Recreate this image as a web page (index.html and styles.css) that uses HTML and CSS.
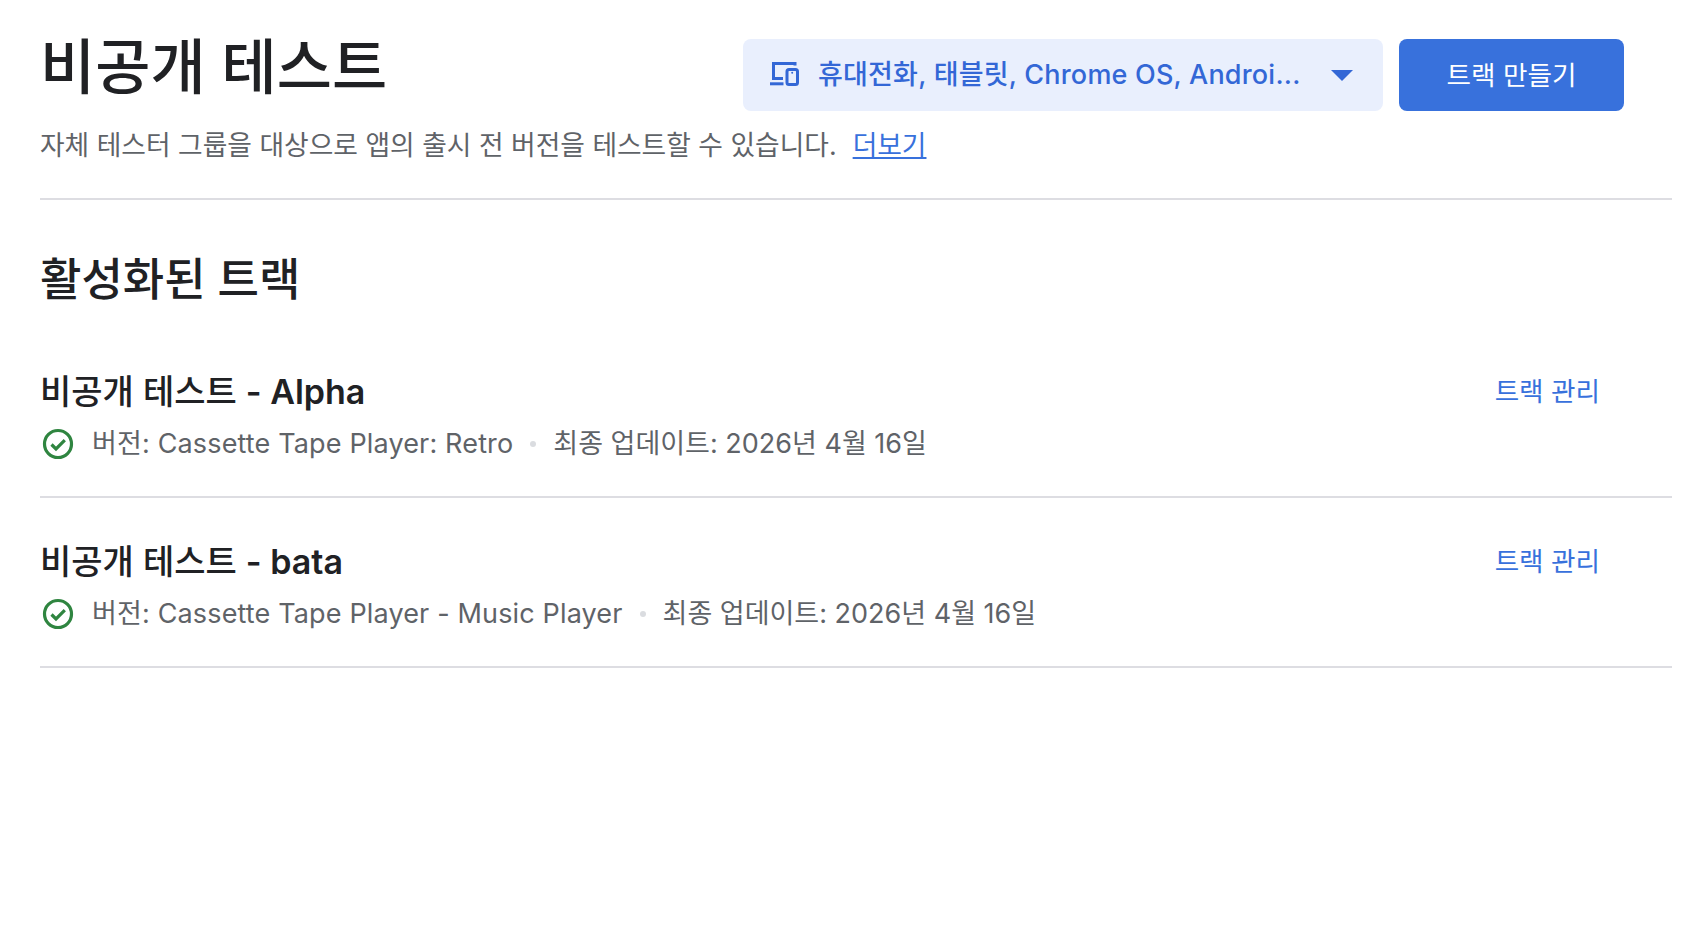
FILE: index.html
```html
<!DOCTYPE html>
<html lang="ko">
<head>
    <meta charset="UTF-8">
    <meta name="viewport" content="width=device-width, initial-scale=1.0">
    <title>비공개 테스트</title>
    <link rel="stylesheet" href="styles.css">
</head>
<body>
    <div id="main">
        <div id="header">
            <div id="headerTop">
                <h1 class="pageTitle">비공개 테스트</h1>
                <div id="headerBtn">
                    <div class="formFactor">
                        <svg class="deviceIcon" width="32" height="32" viewBox="0 0 32 32" fill="none" stroke="#3367d6" stroke-width="3">
                            <path d="M27 6.5V4.5H5.5V19.5H15"/>
                            <path d="M2 24.8H15.5"/>
                            <rect x="19" y="10.5" width="10.5" height="15" rx="2"/>
                            <circle cx="24.2" cy="13.8" r="1" fill="#3367d6" stroke="none"/>
                        </svg>
                        <span class="formText">휴대전화, 태블릿, Chrome OS, Androi...</span>
                        <span class="caret"></span>
                    </div>
                    <button class="createBtn">트랙 만들기</button>
                </div>
            </div>
            <p class="subText">자체 테스터 그룹을 대상으로 앱의 출시 전 버전을 테스트할 수 있습니다.<a class="moreLink" href="#">더보기</a></p>
        </div>

        <h2 class="sectionTitle">활성화된 트랙</h2>

        <div class="track">
            <div class="trackInfo">
                <div class="trackName">비공개 테스트 <span class="trackLatin">- Alpha</span></div>
                <div class="trackMeta">
                    <svg class="okIcon" width="32" height="32" viewBox="0 0 32 32" fill="none" stroke="#2f8540" stroke-width="3.2">
                        <circle cx="16" cy="16" r="13.5"/>
                        <path d="M9.5 16.5L14 21L22.8 12.2"/>
                    </svg>
                    <span class="version">버전: Cassette Tape Player: Retro</span>
                    <span class="dot"></span>
                    <span>최종 업데이트: 2026년 4월 16일</span>
                </div>
            </div>
            <a class="manageLink" href="#">트랙 관리</a>
        </div>

        <div class="track">
            <div class="trackInfo">
                <div class="trackName">비공개 테스트 <span class="trackLatin">- bata</span></div>
                <div class="trackMeta">
                    <svg class="okIcon" width="32" height="32" viewBox="0 0 32 32" fill="none" stroke="#2f8540" stroke-width="3.2">
                        <circle cx="16" cy="16" r="13.5"/>
                        <path d="M9.5 16.5L14 21L22.8 12.2"/>
                    </svg>
                    <span class="version">버전: Cassette Tape Player - Music Player</span>
                    <span class="dot"></span>
                    <span>최종 업데이트: 2026년 4월 16일</span>
                </div>
            </div>
            <a class="manageLink" href="#">트랙 관리</a>
        </div>
    </div>
</body>
</html>
```

FILE: styles.css
```css
body {
    margin: 0;
    background-color: white;
    font-family: 'Inter', 'Noto Sans CJK KR', sans-serif;
    color: #202124;
}

#main {
    padding-left: 40px;
    padding-right: 22px;
}

#header {
    border-bottom: 2px solid #dddde2;
    height: 200px;
    box-sizing: border-box;
}

#headerTop {
    display: flex;
    justify-content: space-between;
    padding-top: 39px;
    padding-right: 48px;
    height: 72px;
}

.pageTitle {
    margin: -2px 0 0;
    font-size: 60px;
    line-height: 60px;
    font-weight: 500;
}

#headerBtn {
    display: flex;
    gap: 16px;
}

.formFactor {
    display: flex;
    align-items: center;
    width: 640px;
    height: 72px;
    box-sizing: border-box;
    padding-left: 25px;
    padding-right: 30px;
    background-color: #e9effd;
    border-radius: 8px;
    color: #3367d6;
    font-size: 27px;
    font-weight: 500;
    letter-spacing: 0.2px;
}

.deviceIcon {
    flex-shrink: 0;
}

.formText {
    flex: 1;
    margin-left: 18px;
    padding-bottom: 6px;
    white-space: nowrap;
}

.caret {
    margin-left: 30px;
    border-left: 11px solid transparent;
    border-right: 11px solid transparent;
    border-top: 11px solid #3367d6;
}

.createBtn {
    width: 225px;
    height: 72px;
    padding: 0 0 4px;
    border: none;
    border-radius: 8px;
    background-color: #3871dc;
    color: white;
    font-family: inherit;
    font-size: 26.6px;
    font-weight: 400;
}

.subText {
    margin: 14px 0 0;
    font-size: 26.75px;
    line-height: 40px;
    color: #5f6368;
}

.moreLink {
    margin-left: 16px;
    color: #3871dc;
}

.sectionTitle {
    margin: 50px 0 0;
    font-size: 45px;
    line-height: 60px;
    font-weight: 500;
    height: 78px;
}

.track {
    display: flex;
    justify-content: space-between;
    height: 170px;
    box-sizing: border-box;
    border-bottom: 2px solid #dddde2;
    padding-top: 42px;
}

.trackName {
    font-size: 34px;
    line-height: 44px;
    font-weight: 500;
}

.trackLatin {
    font-weight: 600;
}

.trackMeta {
    display: flex;
    align-items: center;
    margin-top: 8px;
    font-size: 27px;
    line-height: 44px;
    color: #5f6368;
}

.version {
    letter-spacing: 0.15px;
}

.okIcon {
    margin-left: 2px;
    margin-right: 18px;
}

.dot {
    width: 6px;
    height: 6px;
    margin: 0 17px;
    border-radius: 50%;
    background-color: #dadce0;
}

.manageLink {
    margin-right: 72px;
    font-size: 26.6px;
    line-height: 42px;
    color: #3871dc;
    text-decoration: none;
}
```
